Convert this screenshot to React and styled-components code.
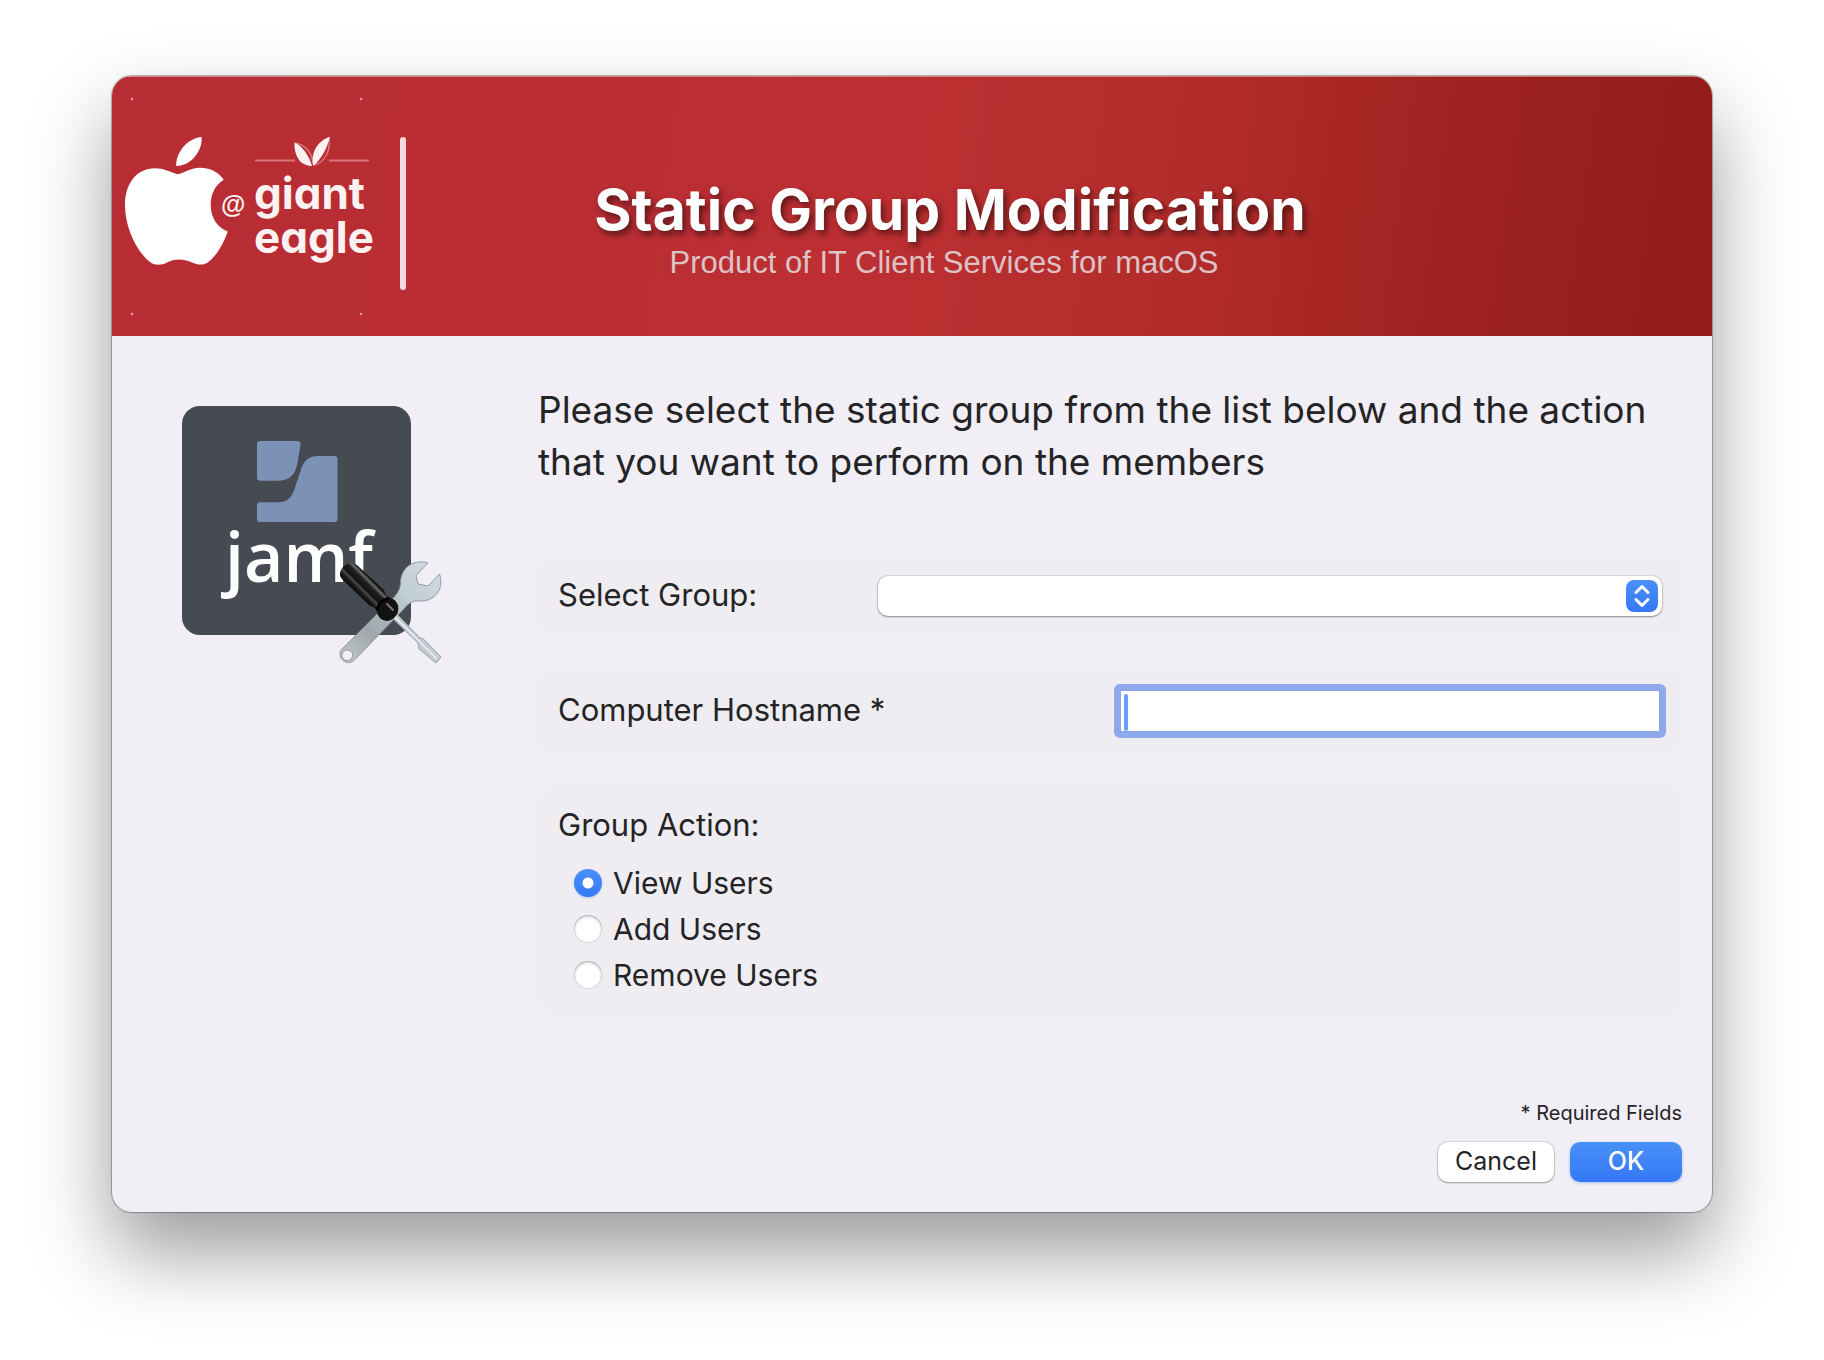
import React from "react";
import styled, { createGlobalStyle } from "styled-components";

const GlobalStyle = createGlobalStyle`
  *, *::before, *::after { box-sizing: border-box; }
  body {
    margin: 0;
    background: #ffffff;
    color: #242426;
    font-family: Inter, "Liberation Sans", sans-serif;
  }
`;

const Desktop = styled.div`
  display: flex;
  min-height: 100vh;
  padding: 76px 112px 148px;
  overflow: hidden;
`;

const Window = styled.form`
  display: flex;
  flex: 1;
  flex-direction: column;
  overflow: hidden;
  border-radius: 20px;
  background: #f1eef5;
  box-shadow: 0 0 1px 1px rgba(0, 0, 0, 0.3), 0 40px 80px rgba(0, 0, 0, 0.4);
`;

const Banner = styled.header`
  display: flex;
  align-items: center;
  padding-right: 224px;
  background: linear-gradient(98deg, #b82c33 0%, #b92d33 30%, #bd2f33 46%, #b42d2c 65%, #9c211f 86%, #921c1a 100%);
  box-shadow: inset 0 1px 0 rgba(255, 255, 255, 0.4);
`;

const BannerLogo = styled.svg`
  flex: none;
  width: 300px;
  height: 260px;
`;

const BannerText = styled.div`
  flex: 1;
  padding-top: 50px;
  text-align: center;
`;

const Title = styled.h1`
  margin: 0;
  color: #ffffff;
  font-size: 57px;
  font-weight: 700;
  line-height: 64px;
  white-space: nowrap;
  text-shadow: 3px 4px 6px rgba(0, 0, 0, 0.5);
`;

const Subtitle = styled.p`
  margin: 0;
  padding-right: 12px;
  color: #dcc3c6;
  font-family: "Liberation Sans", sans-serif;
  font-size: 31px;
  line-height: 42px;
`;

const Body = styled.div`
  display: grid;
  grid-template-columns: 264px minmax(0, 1fr);
  gap: 92px;
  padding: 48px 30px 0 70px;
`;

const AppIcon = styled.svg`
  width: 264px;
  height: 264px;
  margin-top: 22px;
`;

const Main = styled.main`
  display: flex;
  flex-direction: column;
  gap: 32px;
`;

const Message = styled.p`
  margin: 0 0 36px;
  font-size: 37px;
  line-height: 52px;
`;

const Card = styled.section`
  display: flex;
  align-items: center;
  justify-content: space-between;
  padding: ${(p) => (p.$snug ? "16px 16px 16px 20px" : "20px")};
  border-radius: 16px;
  background: #efedf1;
`;

const Label = styled.label`
  padding-bottom: 2px;
  font-size: 31px;
  line-height: 38px;
`;

const SelectBox = styled.div`
  position: relative;
  width: 784px;
`;

const Select = styled.select`
  display: block;
  width: 100%;
  height: 40px;
  padding: 0 44px 0 16px;
  border: 0;
  border-radius: 10px;
  outline: 0;
  appearance: none;
  background: #ffffff;
  box-shadow: 0 0 1px 1px rgba(0, 0, 0, 0.1), 0 1px 2px rgba(0, 0, 0, 0.35);
  color: inherit;
  font: inherit;
  font-size: 26px;
`;

const Stepper = styled.svg`
  position: absolute;
  top: 4px;
  right: 4px;
  width: 32px;
  height: 32px;
  border-radius: 8px;
  background: linear-gradient(#4a90f8, #3478f6);
  pointer-events: none;
`;

const FieldBox = styled.div`
  position: relative;
  width: 552px;
`;

const TextField = styled.input`
  display: block;
  width: 100%;
  height: 54px;
  padding: 0 10px;
  border: 6px solid #8eaaec;
  border-radius: 6px;
  outline: 0;
  background: #ffffff;
  box-shadow: inset 0 0 0 1px #8aa5e6, inset 0 -1px 0 #7492d4;
  caret-color: transparent;
  color: inherit;
  font: inherit;
  font-size: 26px;
`;

const Caret = styled.span`
  position: absolute;
  top: 10px;
  bottom: 7px;
  left: 10px;
  width: 4px;
  border-radius: 2px;
  background: #6a9df8;
`;

const Choices = styled.fieldset`
  min-width: 0;
  margin: 0;
  padding: 20px 20px 16px;
  border: 0;
  border-radius: 16px;
  background: #efedf1;
`;

const Legend = styled.legend`
  float: left;
  width: 100%;
  margin-bottom: 16px;
  padding: 0;
  font-size: 31px;
  line-height: 38px;
`;

const Choice = styled.label`
  display: flex;
  clear: both;
  align-items: center;
  gap: 11px;
  padding-left: 16px;
  font-size: 30px;
  line-height: 46px;
`;

const Radio = styled.input`
  width: 28px;
  height: 28px;
  margin: 0;
  border-radius: 50%;
  appearance: none;
  background: #ffffff;
  box-shadow: inset 0 0 0 1px rgba(0, 0, 0, 0.14), inset 0 2px 3px rgba(0, 0, 0, 0.18);

  &:checked {
    background: radial-gradient(circle, #ffffff 0 5px, transparent 6px), linear-gradient(#4a90f8, #3478f6);
    box-shadow: 0 1px 2px rgba(52, 120, 246, 0.3);
  }
`;

const Footer = styled.footer`
  display: flex;
  flex-direction: column;
  align-items: flex-end;
  gap: 16px;
  margin-top: auto;
  padding: 24px 30px 30px;
`;

const Note = styled.p`
  margin: 0;
  font-size: 20px;
  line-height: 26px;
`;

const Actions = styled.div`
  display: flex;
  gap: 16px;
`;

const Button = styled.button`
  width: ${(p) => (p.$primary ? "112px" : "116px")};
  height: 40px;
  padding: 0 0 2px;
  border: 0;
  border-radius: 10px;
  background: ${(p) => (p.$primary ? "linear-gradient(#4a90f8, #3478f6)" : "#ffffff")};
  box-shadow: ${(p) =>
    p.$primary
      ? "0 1px 3px rgba(52, 120, 246, 0.4)"
      : "0 0 1px 1px rgba(0, 0, 0, 0.1), 0 1px 2px rgba(0, 0, 0, 0.3)"};
  color: ${(p) => (p.$primary ? "#ffffff" : "#242426")};
  font-family: inherit;
  font-size: 25px;
  font-weight: ${(p) => (p.$primary ? 500 : 400)};
  line-height: 38px;
`;

const BrandWord = styled.text`
  fill: #fdf1f2;
  font-family: Inter, "Liberation Sans", sans-serif;
  font-size: 44px;
  font-weight: 700;
  font-feature-settings: "cv11";
`;

function BrandLogo() {
  return (
    <BannerLogo viewBox="0 0 300 260" role="img" aria-label="Apple at Giant Eagle">
      <g fill="#ffffff">
        <path d="M65.300 98.300C58 96 52 92.300 43 92.300C25 92.300 13 107 13 129C13 152 25 176 38 186C43 190 50 189 54 187C62 182.500 71 182.500 79 186C85 189 92 190 97 185.500C105 179 112 167 115.700 155.500C104 151 98.700 140 98.700 129C98.700 118 103 109 111.700 103.700C106 95 97 91.700 88 91.700C79 91.700 72 97 65.300 98.300Z" />
        <path d="M89.700 61C90.500 75 79 90 64.200 90C63.500 77 75 62 89.700 61Z" />
      </g>
      <text x="109" y="137" fill="#fdf1f2" fontFamily="Liberation Sans, sans-serif" fontSize="25" fontWeight="700">
        @
      </text>
      <g fill="none" stroke="#d9757d" strokeWidth="2">
        <path d="M143 84.500H183M217 84.500H257" />
        <path d="M183 67C193 69 200 76 201 88M217 61C219 74 213 86 203 89" strokeWidth="1.500" />
      </g>
      <g fill="#fdf1f2">
        <path d="M182.500 66.500C190 70 197 79 200 90C189 90 182 81 182.500 66.500Z" />
        <path d="M217.700 60.700C216 71 209 83 201.500 90C198 78 205 65 217.700 60.700Z" />
      </g>
      <BrandWord x="142" y="133">giant</BrandWord>
      <BrandWord x="142" y="177">eagle</BrandWord>
      <rect x="288" y="61" width="6" height="153" rx="3" fill="#f6d9db" />
      <g fill="#dd9a9f">
        <circle cx="20" cy="23" r="1.300" />
        <circle cx="249" cy="23" r="1.300" />
        <circle cx="20" cy="238" r="1.300" />
        <circle cx="249" cy="238" r="1.300" />
      </g>
    </BannerLogo>
  );
}

function JamfIcon() {
  return (
    <AppIcon viewBox="0 0 264 264" role="img" aria-label="jamf">
      <defs>
        <linearGradient id="steel" x1="1" y1="0" x2="0" y2="1">
          <stop offset="0" stopColor="#d3dee4" />
          <stop offset="0.350" stopColor="#bfccd2" />
          <stop offset="0.700" stopColor="#9ea7aa" />
          <stop offset="1" stopColor="#c4cbce" />
        </linearGradient>
        <linearGradient id="grip" gradientUnits="userSpaceOnUse" x1="173" y1="187" x2="191" y2="169">
          <stop offset="0" stopColor="#050505" />
          <stop offset="0.200" stopColor="#1c1c1c" />
          <stop offset="0.300" stopColor="#4a4a4a" />
          <stop offset="0.400" stopColor="#101010" />
          <stop offset="0.620" stopColor="#222222" />
          <stop offset="0.720" stopColor="#6c6c6c" />
          <stop offset="0.820" stopColor="#141414" />
          <stop offset="1" stopColor="#000000" />
        </linearGradient>
      </defs>
      <rect width="229" height="229" rx="18" fill="#464a52" />
      <g fill="#7b91b6">
        <path d="M78 35H115Q119 35 118.500 39L115.500 57Q112.500 74.700 96 74.700H78Q75 74.700 75 71.700V38Q75 35 78 35Z" />
        <path d="M78 96.300H97Q108.500 96.300 112.500 83L119.500 62Q123.500 50 136 50H152.500Q155.500 50 155.500 53V113Q155.500 116 152.500 116H78Q75 116 75 113V99.300Q75 96.300 78 96.300Z" />
      </g>
      <text x="43" y="176" fill="#ffffff" fontFamily="Open Sans, Noto Sans, sans-serif" fontSize="68" fontWeight="600">
        jamf
      </text>
      <path
        d="M159 244L206 197Q218 187 218.500 178C218 165 227 156 238 156Q243 155.500 246 157L234 169.500L236 178L246 180L257.500 168C261 178 258 187 250 192C244 196 237 195 232 195Q226 197 220 205L172 254.500A8.500 8.500 0 0 1 159 244ZM165.300 244A5.300 5.300 0 1 0 165.301 244Z"
        fill="url(#steel)"
        fillRule="evenodd"
        stroke="#7f898d"
        strokeWidth="0.800"
      />
      <path d="M208 210L213 206L238 232L241 232.500L259 251L254 257L237 243L236 237Z" fill="#c3cbd0" stroke="#8b9498" strokeWidth="0.800" />
      <path d="M211 209L238 236L255 253" fill="none" stroke="#eef3f5" strokeWidth="1.500" />
      <path
        d="M158 170C157 163 164 156 170 157Q173 157 176 160L202 184Q203 189 208 192C214 193 218 200 216 206Q213 213 206 215C200 215 196 211 195 206Q193 201 188 200L160 173Z"
        fill="url(#grip)"
      />
      <ellipse cx="206" cy="203" rx="10" ry="11" fill="#121212" />
      <path d="M195 204Q197 194 207 192" fill="none" stroke="#000000" strokeWidth="2.500" />
      <path d="M205 198L211 204" fill="none" stroke="#777777" strokeWidth="2" strokeLinecap="round" />
    </AppIcon>
  );
}

const ACTIONS = ["View Users", "Add Users", "Remove Users"];

export default function App() {
  return (
    <>
      <GlobalStyle />
      <Desktop>
        <Window onSubmit={(e) => e.preventDefault()}>
          <Banner>
            <BrandLogo />
            <BannerText>
              <Title>Static Group Modification</Title>
              <Subtitle>Product of IT Client Services for macOS</Subtitle>
            </BannerText>
          </Banner>
          <Body>
            <JamfIcon />
            <Main>
              <Message>
                Please select the static group from the list below and the action that you want to perform on the members
              </Message>
              <Card>
                <Label htmlFor="group">Select Group:</Label>
                <SelectBox>
                  <Select id="group" defaultValue="">
                    <option value="" />
                  </Select>
                  <Stepper viewBox="0 0 32 32" aria-hidden="true">
                    <path
                      d="M10 12.500L16 6.500L22 12.500M10 19.500L16 25.500L22 19.500"
                      fill="none"
                      stroke="#ffffff"
                      strokeWidth="3"
                      strokeLinecap="round"
                      strokeLinejoin="round"
                    />
                  </Stepper>
                </SelectBox>
              </Card>
              <Card $snug>
                <Label htmlFor="hostname">Computer Hostname *</Label>
                <FieldBox>
                  <TextField id="hostname" type="text" required />
                  <Caret />
                </FieldBox>
              </Card>
              <Choices>
                <Legend>Group Action:</Legend>
                {ACTIONS.map((action, i) => (
                  <Choice key={action}>
                    <Radio type="radio" name="action" value={action} defaultChecked={i === 0} />
                    {action}
                  </Choice>
                ))}
              </Choices>
            </Main>
          </Body>
          <Footer>
            <Note>* Required Fields</Note>
            <Actions>
              <Button type="button">Cancel</Button>
              <Button type="submit" $primary>
                OK
              </Button>
            </Actions>
          </Footer>
        </Window>
      </Desktop>
    </>
  );
}
